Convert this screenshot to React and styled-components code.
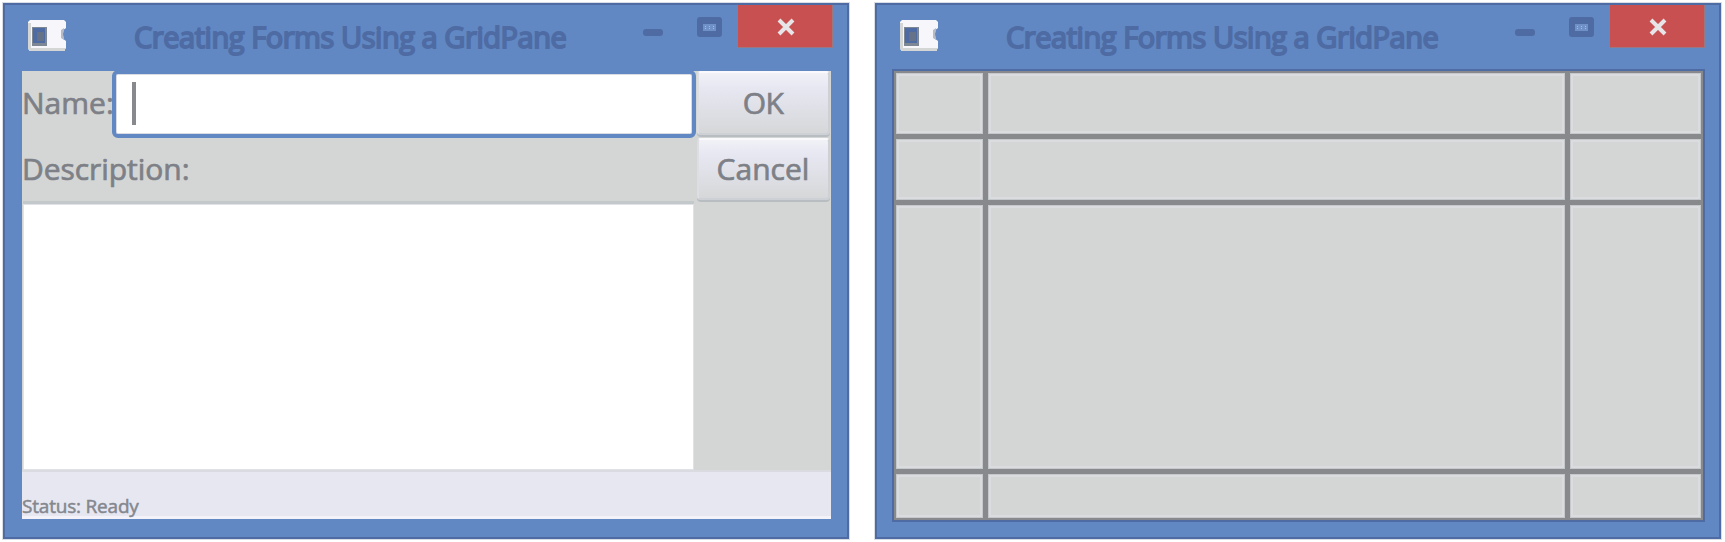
import React from "react";
import styled, { createGlobalStyle } from "styled-components";

const blue = "#6188c3";
const darkBlue = "#4e6ba4";
const grey = "#d4d6d5";
const line = "#87898d";
const pale = "#e7e7f2";
const ink = "#7d8087";

const GlobalStyle = createGlobalStyle`
  * { box-sizing: border-box; }
  body { margin: 0; background: #fff; overflow: hidden; font-family: "Open Sans", "Noto Sans", sans-serif; }
`;

const Desktop = styled.main`
  display: flex;
  gap: 26px;
  width: 1725px;
  height: 542px;
  padding: 3px 0 3px 3px;
`;

const Window = styled.section`
  display: flex;
  flex-direction: column;
  width: 846px;
  height: 536px;
  flex: none;
  background: ${blue};
  border: 2px solid ${darkBlue};
  box-shadow: 0 0 0 1px #d9dde6;
`;

const TitleBar = styled.header`
  display: flex;
  align-items: flex-start;
  height: 66px;
  flex: none;
  padding-left: 23px;
`;

const AppIcon = styled.svg`
  width: 38px;
  height: 32px;
  margin-top: 15px;
  flex: none;
`;

const Title = styled.h1`
  margin: 11px 0 0 68px;
  width: 505px;
  flex: none;
  white-space: nowrap;
  font-size: 29px;
  line-height: 42px;
  font-weight: 400;
  letter-spacing: -0.45px;
  color: ${darkBlue};
  -webkit-text-stroke: 1.8px ${darkBlue};
`;

const Caption = styled.svg`
  width: 82px;
  height: 32px;
  margin: 12px 0 0 2px;
  flex: none;
`;

const CloseButton = styled.button`
  display: flex;
  align-items: center;
  justify-content: center;
  width: 96px;
  height: 43px;
  margin-left: 14px;
  padding: 2px 0 0 1px;
  flex: none;
  background: #c85050;
  border: 1px solid #9a7883;
  border-top: 0;
`;

const Client = styled.div`
  width: 809px;
  height: 448px;
  margin-left: 17px;
  flex: none;
  background: ${grey};
`;

const Form = styled(Client)`
  display: grid;
  grid-template-columns: 90px 584px 135px;
  grid-template-rows: 67px 66px 266px 49px;
`;

const Label = styled.label`
  white-space: nowrap;
  color: ${ink};
  font-size: 30px;
  line-height: 40px;
  letter-spacing: ${(p) => p.$spacing};
  padding: ${(p) => p.$top} 0 0 0;
  -webkit-text-stroke: 0.7px ${ink};
  grid-column: ${(p) => p.$column};
`;

const Field = styled.div`
  display: flex;
  align-items: flex-start;
  margin-top: -1px;
  padding: 8px 0 0 16px;
  background: #fff;
  border: 4px solid ${blue};
  border-radius: 6px;
  box-shadow: inset 0 0 0 1px #d9dce3;
`;

const Caret = styled.span`
  width: 4px;
  height: 43px;
  background: ${line};
`;

const FormButton = styled.button`
  display: flex;
  align-items: flex-start;
  justify-content: center;
  height: ${(p) => p.$height};
  margin: 0 1px 0 1px;
  padding: ${(p) => p.$top} 1px 0 0;
  border: 2px solid #cdd0d5;
  border-top-color: #fafafd;
  border-left-color: #dcdee4;
  border-radius: 4px;
  background: linear-gradient(#f1f1f7, ${pale} 25%, #dedfe5 65%, #d5d7d8);
  box-shadow: 0 2px 0 #b8bdc1;
  font-family: inherit;
  font-size: 30px;
  line-height: 40px;
  letter-spacing: ${(p) => p.$spacing};
  color: ${ink};
  -webkit-text-stroke: 0.7px ${ink};
`;

const TextArea = styled.div`
  grid-column: 1 / 3;
  margin: 0 2px 0 1px;
  background: #fff;
  border: 1px solid #e1e2e8;
  box-shadow: 0 -3px 0 #c3c8ca;
`;

const Status = styled.footer`
  grid-column: 1 / 4;
  padding-top: 20px;
  background: ${pale};
  border-top: 2px solid #dadbe0;
  border-bottom: 3px solid #f2f2f8;
  color: #84878e;
  font-size: 19px;
  line-height: 28px;
  letter-spacing: -0.2px;
  -webkit-text-stroke: 0.5px #84878e;
  white-space: nowrap;
`;

const Grid = styled(Client)`
  display: grid;
  height: 449px;
  grid-template-columns: 87px 577px 131px;
  grid-template-rows: 61px 61px 264px 44px;
  gap: 5px;
  background: ${line};
  border: 2px solid ${line};
  box-shadow: 0 0 0 2px ${darkBlue};
`;

const Cell = styled.div`
  background: ${grey};
  box-shadow: inset 0 0 0 1px #c5c9cb, inset 0 0 0 3px #dadce0;
`;

function Frame({ children }) {
  return (
    <Window>
      <TitleBar>
        <AppIcon viewBox="0 0 38 32">
          <path d="M2 0H36L38 2V8L34 11V18L38 21V28L36 31H2L0 29V2Z" fill="#f7f7fb" />
          <path d="M1 28H37V31H1ZM0 3H3V29H0Z" fill="#d4d6d5" />
          <path d="M33 10 36 8V11L35 14L36 18V20L33 18Z" fill="#b5bcc7" />
          <rect x="4" y="7" width="15" height="19" fill="#7e8894" />
          <rect x="5" y="8" width="12" height="15" fill="#4e6ba4" />
          <rect x="9" y="12" width="7" height="9" fill="#667287" />
        </AppIcon>
        <Title>Creating Forms Using a GridPane</Title>
        <Caption viewBox="0 0 82 32">
          <rect x="2" y="12" width="20" height="7" rx="3" fill={darkBlue} />
          <rect x="56" y="0" width="25" height="20" rx="3" fill={darkBlue} />
          <rect x="62" y="7" width="13" height="7" fill="#7091c7" />
          <path d="M64 9.5H74M64 11.5H74" stroke="#aeb9cb" strokeDasharray="1 3" />
        </Caption>
        <CloseButton aria-label="Close">
          <svg width="20" height="20" viewBox="0 0 20 20">
            <path d="M3 3 17 17M17 3 3 17" stroke="#e8e5e9" strokeWidth="4" />
          </svg>
        </CloseButton>
      </TitleBar>
      {children}
    </Window>
  );
}

export default function App() {
  return (
    <>
      <GlobalStyle />
      <Desktop>
        <Frame>
          <Form>
            <Label $top="12px" $spacing="0px">Name:</Label>
            <Field><Caret /></Field>
            <FormButton $height="64px" $top="10px" $spacing="-0.5px">OK</FormButton>
            <Label $column="1 / 3" $top="11px" $spacing="-0.05px">Description:</Label>
            <FormButton $height="62px" $top="9px" $spacing="0px">Cancel</FormButton>
            <TextArea />
            <div />
            <Status>Status: Ready</Status>
          </Form>
        </Frame>
        <Frame>
          <Grid>
            {Array.from({ length: 12 }, (_, i) => <Cell key={i} />)}
          </Grid>
        </Frame>
      </Desktop>
    </>
  );
}
